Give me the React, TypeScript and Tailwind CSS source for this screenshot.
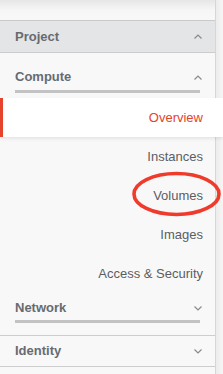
import React from "react";

const Caret = ({ up }: { up?: boolean }) => (
  <svg width="8" height="5" viewBox="0 0 8 5" className="shrink-0">
    <polyline
      points={up ? "0.5,4.5 4,1 7.5,4.5" : "0.5,0.5 4,4 7.5,0.5"}
      fill="none"
      stroke="#8a8a8a"
      strokeWidth="1.2"
    />
  </svg>
);

const Item = ({ label }: { label: string }) => (
  <div className="h-[39px] flex items-center justify-end pr-[12px] text-[13px] text-[#5a5e63]">
    {label}
  </div>
);

export default function App() {
  return (
    <div
      className="relative w-[223px] h-[374px] overflow-hidden flex bg-[#f7f7f7]"
      style={{ fontFamily: '"Liberation Sans", Arial, sans-serif' }}
    >
      <div className="w-[216px] shrink-0 flex flex-col border-r border-[#d6d6d6] bg-[#f8f8f8]">
        <div className="h-[21px] shrink-0 border-b border-[#cacaca] bg-gradient-to-b from-[#e6e6e6] via-[#f6f6f6] to-[#f8f8f8]" />
        <div className="h-[32px] shrink-0 flex items-center justify-between pl-[15px] pr-[13px] bg-[#e4e5e6] border-b border-[#cdcdcd]">
          <span className="text-[13px] font-bold text-[#676b70]">Project</span>
          <Caret up />
        </div>
        <div className="pt-[15px] px-[15px] pb-[5px] shrink-0">
          <div className="flex items-center justify-between h-[18px]">
            <span className="text-[13px] font-bold text-[#676b70]">Compute</span>
            <span className="mr-[-2px]"><Caret up /></span>
          </div>
          <div className="mt-[4px] h-[3px] bg-[#c3c3c3]" />
        </div>
        <div className="relative z-10 w-[223px] h-[39px] shrink-0 flex items-center justify-end pr-[20px] bg-white border-l-[3px] border-[#e5432c] shadow-[0_2px_3px_rgba(0,0,0,0.08)] text-[13px] text-[#e5432c]">
          Overview
        </div>
        <Item label="Instances" />
        <Item label="Volumes" />
        <Item label="Images" />
        <Item label="Access & Security" />
        <div className="pt-[6px] px-[15px] pb-[12px] shrink-0 border-b border-[#cdcdcd]">
          <div className="flex items-center justify-between h-[18px]">
            <span className="text-[13px] font-bold text-[#676b70]">Network</span>
            <span className="mr-[-2px]"><Caret /></span>
          </div>
          <div className="mt-[3px] h-[3px] bg-[#c3c3c3]" />
        </div>
        <div className="h-[31px] shrink-0 flex items-center justify-between pl-[15px] pr-[13px] border-b border-[#cdcdcd]">
          <span className="text-[13px] font-bold text-[#676b70]">Identity</span>
          <Caret />
        </div>
      </div>
      <div className="flex-1 bg-gradient-to-r from-[#ececec] to-[#f6f6f6]" />
      <svg
        className="absolute left-[132px] top-[171px] pointer-events-none"
        width="90"
        height="46"
        viewBox="0 0 90 46"
      >
        <ellipse cx="44.5" cy="23" rx="42.5" ry="20.5" fill="none" stroke="#ef3a2c" strokeWidth="3.6" />
      </svg>
    </div>
  );
}
